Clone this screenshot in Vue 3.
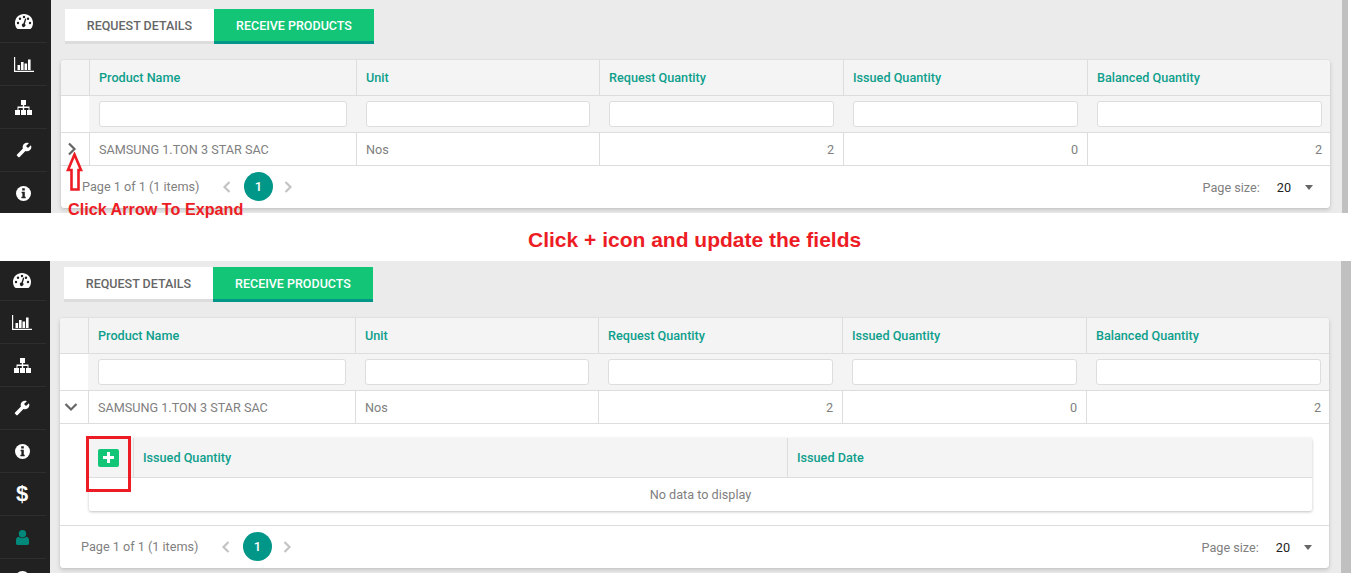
<script setup>
const columns = ['Product Name', 'Unit', 'Request Quantity', 'Issued Quantity', 'Balanced Quantity']
const icons = ['gauge', 'chart', 'sitemap', 'wrench', 'info', 'dollar', 'user', 'more']
const panels = [
  { id: 'top', expanded: false, icons: icons.slice(0, 5) },
  { id: 'bottom', expanded: true, icons }
]
</script>

<template>
  <div class="page">
    <template v-for="(panel, index) in panels" :key="panel.id">
      <section class="panel" :class="'panel-' + panel.id">
        <nav class="side">
          <div v-for="icon in panel.icons" :key="icon" class="side-item" :class="{ more: icon === 'more' }">
            <svg v-if="icon === 'gauge'" width="18" height="15" viewBox="0 0 18 15">
              <path fill="#fff" d="M9 0C4 0 0 3.800 0 9c0 2.200.7 4.200 2 5.600.2.200.4.400.7.400h12.600c.3 0 .5-.2.700-.4 1.300-1.400 2-3.400 2-5.600 0-5.200-4-9-9-9z" />
              <g fill="#212121">
                <circle cx="3" cy="9" r="1.200" /><circle cx="5" cy="4.800" r="1.200" /><circle cx="9" cy="3" r="1.200" />
                <circle cx="13" cy="4.800" r="1.200" /><circle cx="15" cy="9" r="1.200" />
                <path d="M11.300 4.900 9.900 9.800a1.800 1.800 0 1 1-1.500-.4l1.700-4.800z" />
              </g>
            </svg>
            <svg v-else-if="icon === 'chart'" width="20" height="15" viewBox="0 0 20 15">
              <path fill="#fff" d="M0 0h1.200v13.800H20V15H0zM3.500 8h2.600v5H3.500zM7 5h2.600v8H7zM10.500 6.500h2.600V13h-2.600zM14 2.500h2.600V13H14z" />
            </svg>
            <svg v-else-if="icon === 'sitemap'" width="17" height="15" viewBox="0 0 17 15">
              <path fill="#fff" d="M6 0h5v5H9.200v1.500h5.300V10H17v5h-5v-5h1.500V8H9.200v2H11v5H6v-5h1.800V8H3.500v2H5v5H0v-5h2.500V6.500h5.300V5H6z" />
            </svg>
            <svg v-else-if="icon === 'wrench'" width="16" height="16" viewBox="0 0 24 24">
              <path fill="#fff" transform="translate(24 0) scale(-1 1)" d="M22.700 19l-9.100-9.100c.9-2.300.4-5-1.500-6.900-2-2-5-2.400-7.400-1.300L9 6 6 9 1.600 4.700C.4 7.100.9 10.100 2.900 12.100c1.900 1.900 4.600 2.400 6.900 1.500l9.100 9.100c.4.400 1 .4 1.400 0l2.300-2.300c.5-.4.500-1.100.1-1.400z" />
            </svg>
            <svg v-else-if="icon === 'info'" width="15" height="15" viewBox="0 0 15 15">
              <circle cx="7.500" cy="7.500" r="7.500" fill="#fff" />
              <path fill="#212121" d="M6.200 2.300h2.600v2.100H6.200zM5.600 5.700h3.200v5h.9v1.600H5.400v-1.600h1V7.300h-.8z" />
            </svg>
            <span v-else-if="icon === 'dollar'" class="dollar">$</span>
            <svg v-else-if="icon === 'user'" width="13" height="15" viewBox="0 0 13 15">
              <circle cx="6.500" cy="3.700" r="3.700" fill="#00897b" />
              <path fill="#00897b" d="M2.500 6.800c1 .9 2.500 1.400 4 1.400s3-.5 4-1.400c1.600.3 2.500 1.700 2.500 3.500v2.900c0 1-.8 1.800-1.800 1.800H1.800C.8 15 0 14.200 0 13.200v-2.900c0-1.800.9-3.200 2.500-3.500z" />
            </svg>
            <svg v-else width="15" height="15" viewBox="0 0 15 15">
              <circle cx="7.500" cy="7.500" r="7.500" fill="#fff" />
            </svg>
          </div>
        </nav>

        <main class="main">
          <div class="tabs">
            <div class="tab">Request Details</div>
            <div class="tab tab-on">Receive Products</div>
          </div>

          <div class="grid">
            <div class="row head">
              <div class="cell first"></div>
              <div v-for="col in columns" :key="col" class="cell">{{ col }}</div>
            </div>
            <div class="row filter">
              <div class="cell first"></div>
              <div v-for="col in columns" :key="col" class="cell"><input class="box" type="text" /></div>
            </div>
            <div class="row data">
              <div class="cell first">
                <svg width="14" height="14" viewBox="0 0 14 14" :class="{ open: panel.expanded }" class="chev">
                  <path d="M4 1.500 9.500 7 4 12.500" fill="none" stroke="#666" stroke-width="2.200" />
                </svg>
              </div>
              <div class="cell">SAMSUNG 1.TON 3 STAR SAC</div>
              <div class="cell">Nos</div>
              <div class="cell num">2</div>
              <div class="cell num">0</div>
              <div class="cell num">2</div>
            </div>

            <div v-if="panel.expanded" class="detail">
              <div class="sub">
                <div class="sub-head">
                  <div class="sub-first">
                    <button class="add" type="button">
                      <svg width="11" height="11" viewBox="0 0 11 11"><path fill="#fff" d="M4 0h3v4h4v3H7v4H4V7H0V4h4z" /></svg>
                    </button>
                  </div>
                  <div class="sub-cell sub-qty">Issued Quantity</div>
                  <div class="sub-cell">Issued Date</div>
                </div>
                <div class="empty">No data to display</div>
              </div>
            </div>

            <div class="pager">
              <span class="summary">Page 1 of 1 (1 items)</span>
              <svg class="nav" width="10" height="14" viewBox="0 0 10 14"><path d="M7.500 2 2.500 7l5 5" fill="none" stroke="#c4c4c4" stroke-width="2.200" /></svg>
              <span class="current">1</span>
              <svg class="nav" width="10" height="14" viewBox="0 0 10 14"><path d="M2.500 2l5 5-5 5" fill="none" stroke="#c4c4c4" stroke-width="2.200" /></svg>
              <span class="size-label">Page size:</span>
              <span class="size">20</span>
              <span class="caret"></span>
            </div>
          </div>
        </main>
        <div class="scroll"></div>
      </section>

      <div v-if="index === 0" class="banner">Click + icon and update the fields</div>
    </template>

    <svg class="arrow" width="18" height="40" viewBox="0 0 18 40">
      <path d="M8.500 2.500 15 18H12.500V37.500H5.500V18H2z" fill="#fff" stroke="#ed1c24" stroke-width="2.600" />
    </svg>
    <div class="note">Click Arrow To Expand</div>
    <div class="mark"></div>
  </div>
</template>

<style>
html, body { background: #fff; }
</style>

<style scoped>
.page {
  position: relative;
  width: 1360px;
  font-family: Roboto, "Liberation Sans", sans-serif;
  font-size: 12.650px;
  color: #808080;
}
.panel {
  display: flex;
  overflow: hidden;
  background: #ebebeb;
}
.panel-top { width: 1348px; height: 213px; }
.panel-bottom { width: 1351px; height: 312px; }
.side {
  flex: none;
  background: #212121;
  padding-right: 4px;
}
.panel-top .side { width: 47px; }
.panel-bottom .side { width: 46px; }
.side-item {
  display: flex;
  align-items: center;
  justify-content: center;
  height: 43px;
  border-bottom: 1px solid #2e2e2e;
  box-sizing: border-box;
}
.panel-bottom .side-item { padding-right: 2px; }
.panel-bottom .side-item:first-child { height: 40px; }
.side-item.more { align-items: flex-start; padding-top: 12px; }
.dollar {
  font-family: "Liberation Sans", sans-serif;
  font-weight: 700;
  font-size: 22px;
  color: #fff;
}
.main {
  flex: 1;
  min-width: 0;
  padding: 9px 0 0 10px;
}
.panel-bottom .main { padding-top: 6px; }
.tabs {
  display: flex;
  margin: 0 0 16px 4px;
}
.tab {
  box-sizing: border-box;
  width: 149px;
  height: 35px;
  line-height: 33px;
  text-align: center;
  text-transform: uppercase;
  font-weight: 500;
  font-size: 12.500px;
  color: #666;
  background: #fff;
  border-bottom: 3px solid #dcdcdc;
}
.tab-on {
  width: 160px;
  color: #fff;
  background: #13c677;
  border-bottom-color: #009688;
}
.grid {
  width: 1269px;
  background: #fff;
  border-radius: 3px;
  box-shadow: 0 2px 4px rgba(0, 0, 0, .16), 0 0 1px rgba(0, 0, 0, .2);
}
.row {
  display: grid;
  grid-template-columns: 28px 267px 243px 244px 244px 1fr;
  border-bottom: 1px solid #ddd;
  box-sizing: border-box;
}
.cell {
  display: flex;
  align-items: center;
  box-sizing: border-box;
  padding: 0 9px;
  border-left: 1px solid #ddd;
  min-width: 0;
}
.cell.first { border-left: 0; padding: 0 0 0 4px; }
.cell:last-child { padding-right: 8px; }
.head { height: 36px; background: #f4f4f4; color: #0e9f8c; font-weight: 500; border-radius: 3px 3px 0 0; }
.filter { height: 37px; background: #f4f4f4; }
.filter .cell { border-left-color: transparent; }
.filter .first { background: #fff; }
.box {
  box-sizing: border-box;
  width: 100%;
  height: 26px;
  background: #fff;
  border: 1px solid #ddd;
  border-radius: 3px;
}
.data { height: 33px; }
.num { justify-content: flex-end; }
.chev.open { transform: rotate(90deg); }
.detail {
  height: 102px;
  box-sizing: border-box;
  padding: 14px 17px 0 29px;
  border-bottom: 1px solid #ddd;
}
.sub {
  background: #fff;
  box-shadow: 0 1px 3px rgba(0, 0, 0, .25);
  border-radius: 2px;
}
.sub-head {
  display: flex;
  height: 40px;
  background: #f4f4f4;
  border-bottom: 1px solid #ddd;
  box-sizing: border-box;
  color: #0e9f8c;
  font-weight: 500;
}
.sub-first {
  flex: none;
  display: flex;
  align-items: center;
  width: 44px;
  padding-left: 9px;
  box-sizing: border-box;
}
.add {
  display: flex;
  align-items: center;
  justify-content: center;
  width: 21px;
  height: 18px;
  padding: 0;
  border: 0;
  border-radius: 2px;
  background: #13c677;
}
.sub-cell {
  flex: 1;
  display: flex;
  align-items: center;
  padding: 0 9px;
  border-left: 1px solid #ddd;
}
.sub-qty { flex: none; width: 654px; box-sizing: border-box; }
.empty { height: 33px; line-height: 33px; text-align: center; }
.pager {
  display: flex;
  align-items: center;
  box-sizing: border-box;
  height: 42px;
  padding: 0 17px 2px 21px;
}
.summary { width: 140px; }
.nav { flex: none; margin-top: 2px; }
.current {
  width: 29px;
  height: 29px;
  margin: 0 10px 0 12px;
  line-height: 29px;
  text-align: center;
  font-weight: 500;
  font-size: 13px;
  color: #fff;
  background: #009688;
  border-radius: 50%;
}
.size-label { margin: 2px 0 0 auto; }
.size { margin: 2px 0 0 17px; color: #222; }
.caret {
  margin: 2px 0 0 14px;
  border: 4.500px solid transparent;
  border-top: 5px solid #666;
  border-bottom: 0;
}
.scroll { flex: none; width: 6px; background: #c0c0c0; }
.panel-bottom .scroll { width: 10px; }
.banner {
  height: 48px;
  padding: 17px 0 0 528px;
  box-sizing: border-box;
  font-family: "Liberation Sans", sans-serif;
  font-weight: 700;
  font-size: 21px;
  line-height: 20px;
  color: #ed1c24;
}
.arrow { position: absolute; left: 66px; top: 152px; }
.note {
  position: absolute;
  left: 68px;
  top: 200px;
  font-family: "Liberation Sans", sans-serif;
  font-weight: 700;
  font-size: 16.200px;
  line-height: 18px;
  color: #ed1c24;
}
.mark {
  position: absolute;
  left: 86px;
  top: 436px;
  width: 45px;
  height: 56px;
  box-sizing: border-box;
  border: 3px solid #ed1c24;
}
</style>
